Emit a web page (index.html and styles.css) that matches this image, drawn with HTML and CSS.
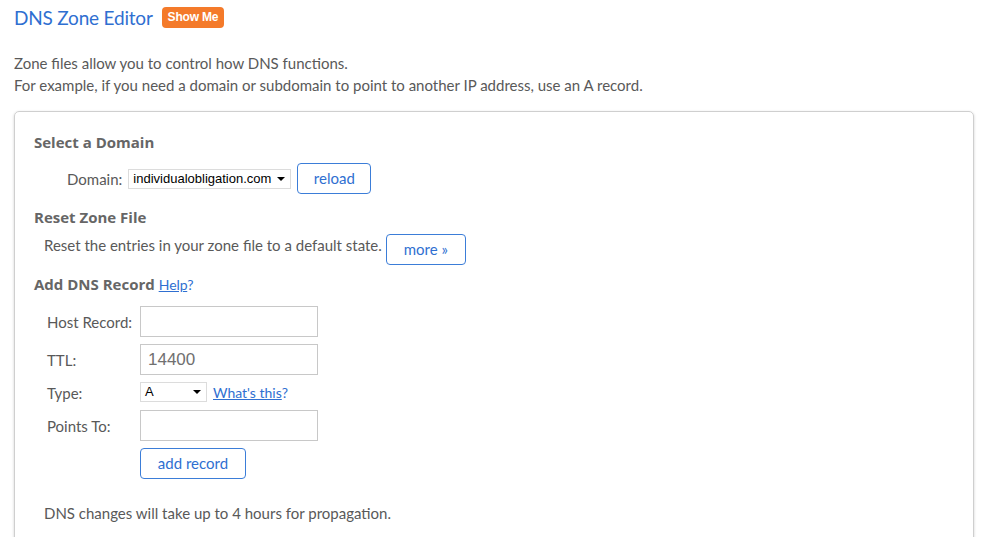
FILE: index.html
```html
<!DOCTYPE html>
<html>
<head>
<meta charset="utf-8">
<link rel="stylesheet" href="styles.css">
</head>
<body>
<header class="page-head">
  <h1 class="title">DNS Zone Editor</h1>
  <span class="show-me">Show Me</span>
</header>
<p class="intro">Zone files allow you to control how DNS functions.<br>For example, if you need a domain or subdomain to point to another IP address, use an A record.</p>

<div class="panel">
  <h2 class="sec">Select a Domain</h2>
  <div class="domain-row">
    <span class="lbl">Domain:</span>
    <span class="select domain-select">individualobligation.com<span class="caret"></span></span>
    <span class="btn reload">reload</span>
  </div>

  <h2 class="sec reset-h">Reset Zone File</h2>
  <div class="reset-row">
    <span class="reset-text">Reset the entries in your zone file to a default state.</span>
    <span class="btn more">more »</span>
  </div>

  <h2 class="sec add-h">Add DNS Record <a class="help" href="#">Help</a><span class="q">?</span></h2>
  <div class="form">
    <span class="flabel">Host Record:</span>
    <span class="input"></span>
    <span class="flabel">TTL:</span>
    <span class="input">14400</span>
    <span class="flabel">Type:</span>
    <span class="type-cell"><span class="select type-select">A<span class="caret"></span></span><a class="help whats" href="#">What's this</a><span class="q">?</span></span>
    <span class="flabel">Points To:</span>
    <span class="input"></span>
    <span></span>
    <span><span class="btn add">add record</span></span>
  </div>
  <p class="note">DNS changes will take up to 4 hours for propagation.</p>
</div>
</body>
</html>
```

FILE: styles.css
```css
html, body {
  margin: 0;
  padding: 0;
  background: #fff;
}
body {
  font-family: Lato, "Open Sans", sans-serif;
  color: #595959;
  padding: 0 14px;
  font-size: 15px;
}
.page-head {
  display: flex;
  align-items: center;
  height: 36px;
  gap: 9px;
}
.title {
  margin: 0;
  font-weight: normal;
  font-size: 19px;
  color: #2f6fd1;
  line-height: 24px;
  letter-spacing: -0.2px;
}
.show-me {
  background: #f47a2a;
  color: #fff;
  font-family: "Liberation Sans", Arial, sans-serif;
  font-size: 12px;
  font-weight: bold;
  letter-spacing: -0.2px;
  padding: 0 6px;
  height: 21px;
  line-height: 20px;
  border-radius: 4px;
  margin-top: -2px;
}
.intro {
  margin: 16px 0 0;
  line-height: 22px;
}
.panel {
  margin-top: 15px;
  border: 1px solid #cfcfcf;
  border-radius: 5px;
  box-shadow: 0 1px 3px rgba(0,0,0,0.18);
  padding: 19px 19px 20px;
  width: 920px;
}
.sec {
  margin: 0;
  font-family: "Open Sans", Lato, sans-serif;
  font-size: 15px;
  font-weight: bold;
  color: #666;
  line-height: 22px;
}
.domain-row {
  display: flex;
  align-items: center;
  margin-top: 10px;
  padding-left: 33px;
  height: 31px;
}
.lbl {
  margin-right: 6px;
}
.select {
  position: relative;
  display: inline-block;
  box-sizing: border-box;
  height: 20px;
  border: 1px solid #dcdcdc;
  font-family: "Liberation Sans", Arial, sans-serif;
  font-size: 13px;
  color: #000;
  line-height: 18px;
  padding-left: 4px;
  background: #fff;
}
.caret {
  position: absolute;
  right: 5px;
  top: 7px;
  border-left: 4px solid transparent;
  border-right: 4px solid transparent;
  border-top: 4px solid #000;
}
.domain-select {
  width: 163px;
}
.btn {
  display: inline-block;
  box-sizing: border-box;
  height: 31px;
  line-height: 29px;
  border: 1px solid #3b7dd8;
  border-radius: 4px;
  color: #2f6fd1;
  text-align: center;
  background: #fff;
}
.reload {
  width: 74px;
  margin-left: 6px;
}
.reset-h {
  margin-top: 12px;
}
.reset-row {
  display: flex;
  align-items: flex-start;
  padding-left: 10px;
  margin-top: 6px;
}
.reset-text {
  line-height: 22px;
}
.more {
  width: 80px;
  margin-left: 4px;
}
.add-h {
  margin-top: 8px;
}
.help {
  font-family: Lato, sans-serif;
  font-weight: normal;
  font-size: 14px;
  color: #2f6fd1;
  text-decoration: underline;
}
.q {
  font-family: Lato, sans-serif;
  font-weight: normal;
  font-size: 14px;
  color: #2f6fd1;
}
.form {
  display: grid;
  grid-template-columns: 93px auto;
  row-gap: 7px;
  align-items: center;
  justify-content: start;
  padding-left: 13px;
  margin-top: 10px;
}
.input {
  display: block;
  box-sizing: border-box;
  width: 178px;
  height: 31px;
  border: 1px solid #c8c8c8;
  font-family: "Liberation Sans", Arial, sans-serif;
  font-size: 17px;
  color: #707070;
  line-height: 29px;
  padding-left: 7px;
}
.type-cell {
  display: flex;
  align-items: center;
  height: 21px;
}
.type-select {
  width: 67px;
  align-self: flex-start;
}
.whats {
  margin-left: 6px;
}
.add {
  width: 106px;
}
.note {
  margin: 23px 0 0;
  padding-left: 10px;
  line-height: 22px;
}
```
